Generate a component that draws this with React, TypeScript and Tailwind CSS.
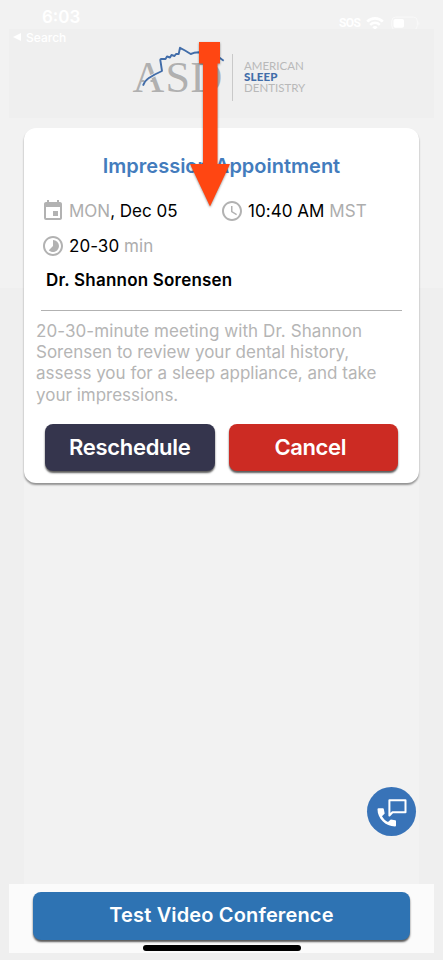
import React from 'react';
import { MdAccessTime, MdEvent, MdTimelapse } from 'react-icons/md';

interface ActionButtonProps {
  label: string;
  className: string;
}

const ActionButton: React.FC<ActionButtonProps> = ({ label, className }) => (
  <button
    className={`flex items-center justify-center rounded-lg font-semibold text-white shadow-[0_2px_2px_rgba(0,0,0,0.65)] ${className}`}
  >
    {label}
  </button>
);

const StatusBar: React.FC = () => (
  <div className="flex h-[29px] shrink-0 items-start justify-between pl-[42px] pr-[23px] text-white">
    <span className="mt-[6px] text-[17px] font-semibold leading-[22px]">6:03</span>
    <div className="mt-[16px] flex items-center">
      <span className="w-[22px] font-[Roboto,sans-serif] text-[12px] font-bold leading-[15px] tracking-[-0.6px]">
        SOS
      </span>
      <svg className="ml-[5px]" width="18" height="13" viewBox="0 0 18 13" fill="none" stroke="currentColor">
        <path d="M1.2 4.6a11 11 0 0 1 15.6 0" strokeWidth="2.6" />
        <path d="M4.2 7.8a6.8 6.8 0 0 1 9.6 0" strokeWidth="2.4" />
        <path d="M9 12.8 6.4 10.2a3.7 3.7 0 0 1 5.2 0z" fill="currentColor" stroke="none" />
      </svg>
      <svg className="ml-[7px]" width="29" height="15" viewBox="0 0 29 15">
        <rect x="0.8" y="1" width="25.5" height="12.8" rx="4" fill="none" stroke="#f9f9f9" />
        <rect x="2.5" y="3" width="10.5" height="8.8" rx="1.8" fill="white" />
        <path d="M27.5 5.2c1.2.8 1.2 3.6 0 4.4z" fill="#f9f9f9" />
      </svg>
    </div>
  </div>
);

const Header: React.FC = () => (
  <header className="mx-[9px] flex h-[89px] shrink-0 flex-col bg-[#efefef]">
    <div className="flex h-[16px] items-center gap-[5px] pl-[4px] text-white">
      <svg width="8" height="8" viewBox="0 0 8 8" fill="currentColor">
        <path d="M0 4 8 0v8z" />
      </svg>
      <span className="text-[12px] font-medium leading-[15px]">Search</span>
    </div>
    <div className="flex pl-[122px]">
      <svg width="102" height="62" viewBox="0 0 102 62">
        <text x="1.5 34.5 59.5" y="47" fontFamily="'Liberation Serif', serif" fontSize="44" fill="#b0b0b0">
          ASD
        </text>
        {/* clears the crossbar so the profile line can replace it */}
        <path d="M13.500 36.500H19.500" stroke="#efefef" strokeWidth="3" />
        <path d="M18 32.800 28 27.500" stroke="#efefef" strokeWidth="3.500" />
        <path
          d="M12 40.700Q14 35.500 17.500 33.300Q23 29.500 31 26L29.300 15Q29.300 13.500 31 14L34.500 14L36 11.500L39 12.500L40.500 10L43.500 11L45 9L47.700 9L49 2.800L54 5.500L59.700 9L63 7.800L68 7.300L82 8L92.700 15.700"
          fill="none"
          stroke="#426da9"
          strokeWidth="1.900"
          strokeLinejoin="round"
        />
        <path d="M101.500 9v47" stroke="#c9c9c9" />
      </svg>
      <div className="ml-[11px] mt-[15px] flex flex-col font-[Lato,sans-serif] text-[11.500px] leading-[11.200px] text-[#b9b9b9]">
        <span>AMERICAN</span>
        <span className="font-black tracking-[0.2px] text-[#426da9]">SLEEP</span>
        <span>DENTISTRY</span>
      </div>
    </div>
  </header>
);

const AppointmentCard: React.FC = () => (
  <section className="flex h-[355px] flex-col rounded-[12px] bg-white shadow-[0_2px_2px_rgba(0,0,0,0.4)]">
    <h1 className="mt-[25px] text-center text-[20px] font-semibold leading-[26px] text-[#437cbd]">
      Impression Appointment
    </h1>
    <div className="mt-[20px] flex h-[24px] items-center text-[17px] text-black">
      <MdEvent className="ml-[17px] size-[24px] text-[#b2b2b2]" />
      <span className="ml-[4px] mt-[2px] w-[151px]">
        <span className="text-[#adadad]">MON</span>, Dec 05
      </span>
      <MdAccessTime className="size-[24px] text-[#b2b2b2]" />
      <span className="ml-[4px] mt-[2px] whitespace-nowrap tracking-[0.05px]">
        10:40 AM <span className="text-[#adadad]">MST</span>
      </span>
    </div>
    <div className="mt-[11px] flex h-[24px] items-center text-[17px] text-black">
      <MdTimelapse className="ml-[17px] size-[24px] text-[#b2b2b2]" />
      <span className="ml-[4px] mt-[2px] tracking-[0.05px]">
        20-30 <span className="text-[#adadad]">min</span>
      </span>
    </div>
    <p className="ml-[22px] mt-[11px] text-[17px] font-semibold leading-[22px] tracking-[0.2px] text-black">
      Dr. Shannon Sorensen
    </p>
    <hr className="ml-[17px] mr-[17px] mt-[19px] border-[#b2b2b2]" />
    <p className="ml-[12px] mt-[10px] whitespace-nowrap text-[17px] leading-[21.200px] text-[#b5b5b5]">
      <span className="tracking-[0.08px]">20-30-minute meeting with Dr. Shannon</span>
      <br />
      Sorensen to review your dental history,
      <br />
      assess you for a sleep appliance, and take
      <br />
      your impressions.
    </p>
    <div className="ml-[21px] mr-[21px] mt-[18px] grid grid-cols-2 gap-[14px]">
      <ActionButton label="Reschedule" className="h-[47px] bg-[#35354d] text-[22px] tracking-[-0.300px]" />
      <ActionButton label="Cancel" className="h-[47px] bg-[#cc2b23] pr-[6px] text-[22px] tracking-[-0.400px]" />
    </div>
  </section>
);

const CallIcon: React.FC = () => (
  <svg width="30" height="30" viewBox="0 0 30 30" fill="none">
    <path d="M12.400 3.200H28.500V15.200H15.500L12.400 18.500z" stroke="white" strokeWidth="2" strokeLinejoin="round" />
    <path
      d="M1.500 11.300H6q.6 0 .8.700l.9 4.400-2.700 2.800c1.500 2.600 3.400 4.500 6 5.900l2.800-2.700 4.500.9q.7.200.7.900v4.300q0 1-1 1C8.500 29.500.5 21.500.5 12.300q0-1 1-1z"
      fill="white"
    />
  </svg>
);

const Arrow: React.FC = () => (
  <svg
    className="absolute left-[188px] top-[40px] drop-shadow-[0_1px_1px_rgba(0,0,0,0.4)]"
    width="44"
    height="170"
    viewBox="0 0 44 170"
  >
    <path d="M11 2H32V23.500H29.500V124H42L22 166.500 2 124H15V23.500H11z" fill="#ff4612" />
  </svg>
);

const App: React.FC = () => (
  <div className="relative flex h-[960px] w-[443px] flex-col overflow-hidden bg-[linear-gradient(to_bottom,#f2f2f2_288px,#efefef_288px)] font-[Inter,sans-serif]">
    <StatusBar />
    <Header />
    <main className="mx-6 flex flex-1 flex-col bg-[#f2f2f2] pt-[10px]">
      <AppointmentCard />
      <button
        aria-label="Contact us"
        className="mb-[48px] mr-[3px] mt-auto flex size-[49px] items-center justify-center self-end rounded-full bg-[#3873b8]"
      >
        <CallIcon />
      </button>
    </main>
    <footer className="mx-[9px] mb-[7px] flex h-[69px] shrink-0 flex-col items-center bg-[#fbfbfb] pt-[8px]">
      <ActionButton
        label="Test Video Conference"
        className="h-[48px] w-[377px] bg-[#2e73b3] pb-[2px] text-[20px] tracking-[0.150px]"
      />
      <div className="mt-[5px] h-[6px] w-[158px] rounded-full bg-black" />
    </footer>
    <Arrow />
  </div>
);

export default App;
